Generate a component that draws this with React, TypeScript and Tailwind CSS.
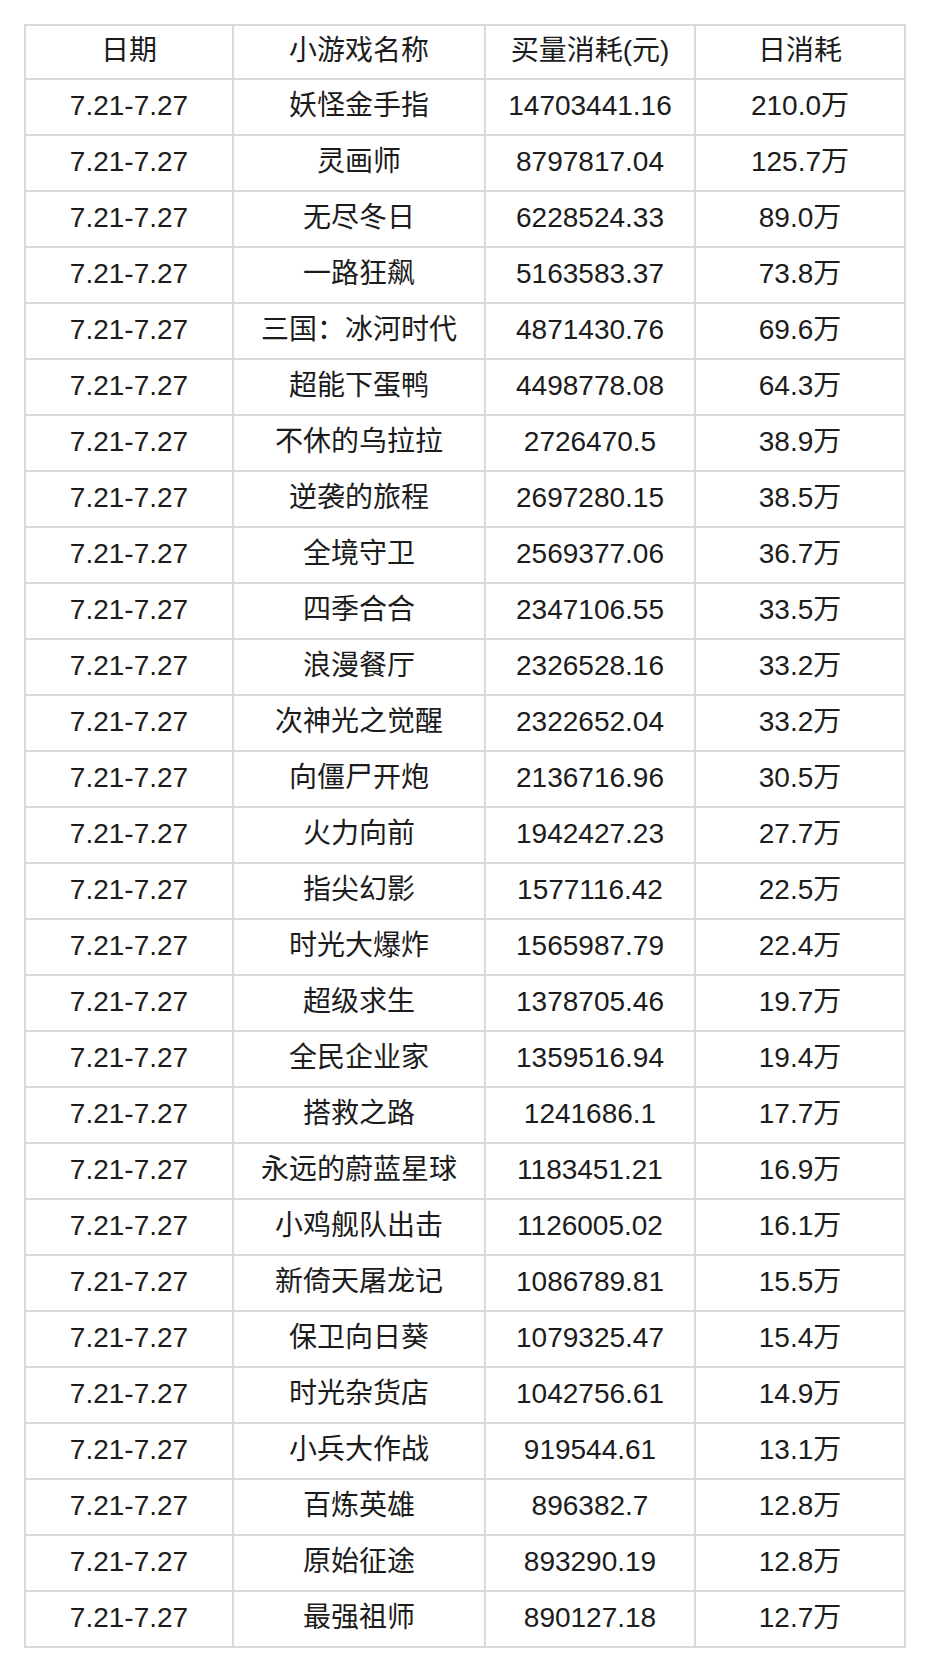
import React from "react";

const rows: [string, string, string][] = [
  ["妖怪金手指", "14703441.16", "210.0万"],
  ["灵画师", "8797817.04", "125.7万"],
  ["无尽冬日", "6228524.33", "89.0万"],
  ["一路狂飙", "5163583.37", "73.8万"],
  ["三国：冰河时代", "4871430.76", "69.6万"],
  ["超能下蛋鸭", "4498778.08", "64.3万"],
  ["不休的乌拉拉", "2726470.5", "38.9万"],
  ["逆袭的旅程", "2697280.15", "38.5万"],
  ["全境守卫", "2569377.06", "36.7万"],
  ["四季合合", "2347106.55", "33.5万"],
  ["浪漫餐厅", "2326528.16", "33.2万"],
  ["次神光之觉醒", "2322652.04", "33.2万"],
  ["向僵尸开炮", "2136716.96", "30.5万"],
  ["火力向前", "1942427.23", "27.7万"],
  ["指尖幻影", "1577116.42", "22.5万"],
  ["时光大爆炸", "1565987.79", "22.4万"],
  ["超级求生", "1378705.46", "19.7万"],
  ["全民企业家", "1359516.94", "19.4万"],
  ["搭救之路", "1241686.1", "17.7万"],
  ["永远的蔚蓝星球", "1183451.21", "16.9万"],
  ["小鸡舰队出击", "1126005.02", "16.1万"],
  ["新倚天屠龙记", "1086789.81", "15.5万"],
  ["保卫向日葵", "1079325.47", "15.4万"],
  ["时光杂货店", "1042756.61", "14.9万"],
  ["小兵大作战", "919544.61", "13.1万"],
  ["百炼英雄", "896382.7", "12.8万"],
  ["原始征途", "893290.19", "12.8万"],
  ["最强祖师", "890127.18", "12.7万"],
];

const font = {
  fontFamily: '"Liberation Sans", "Noto Sans CJK SC", sans-serif',
};

function Cell({ children, h }: { children: React.ReactNode; h: string }) {
  return (
    <div
      className={`bg-white flex items-center justify-center text-[28px] leading-none text-[#1c1c1c] pb-[3px] ${h}`}
    >
      {children}
    </div>
  );
}

export default function App() {
  return (
    <div className="w-[930px] h-[1672px] bg-white pt-[24px] pl-[24px]" style={font}>
      <div className="w-[882px] bg-[#dadada] p-[2px] grid grid-cols-[206px_250px_208px_208px] gap-[2px]">
        <Cell h="h-[52px]">日期</Cell>
        <Cell h="h-[52px]">小游戏名称</Cell>
        <Cell h="h-[52px]">买量消耗(元)</Cell>
        <Cell h="h-[52px]">日消耗</Cell>
        {rows.map((r, i) => (
          <React.Fragment key={i}>
            <Cell h="h-[54px]">7.21-7.27</Cell>
            <Cell h="h-[54px]">{r[0]}</Cell>
            <Cell h="h-[54px]">{r[1]}</Cell>
            <Cell h="h-[54px]">{r[2]}</Cell>
          </React.Fragment>
        ))}
      </div>
    </div>
  );
}
